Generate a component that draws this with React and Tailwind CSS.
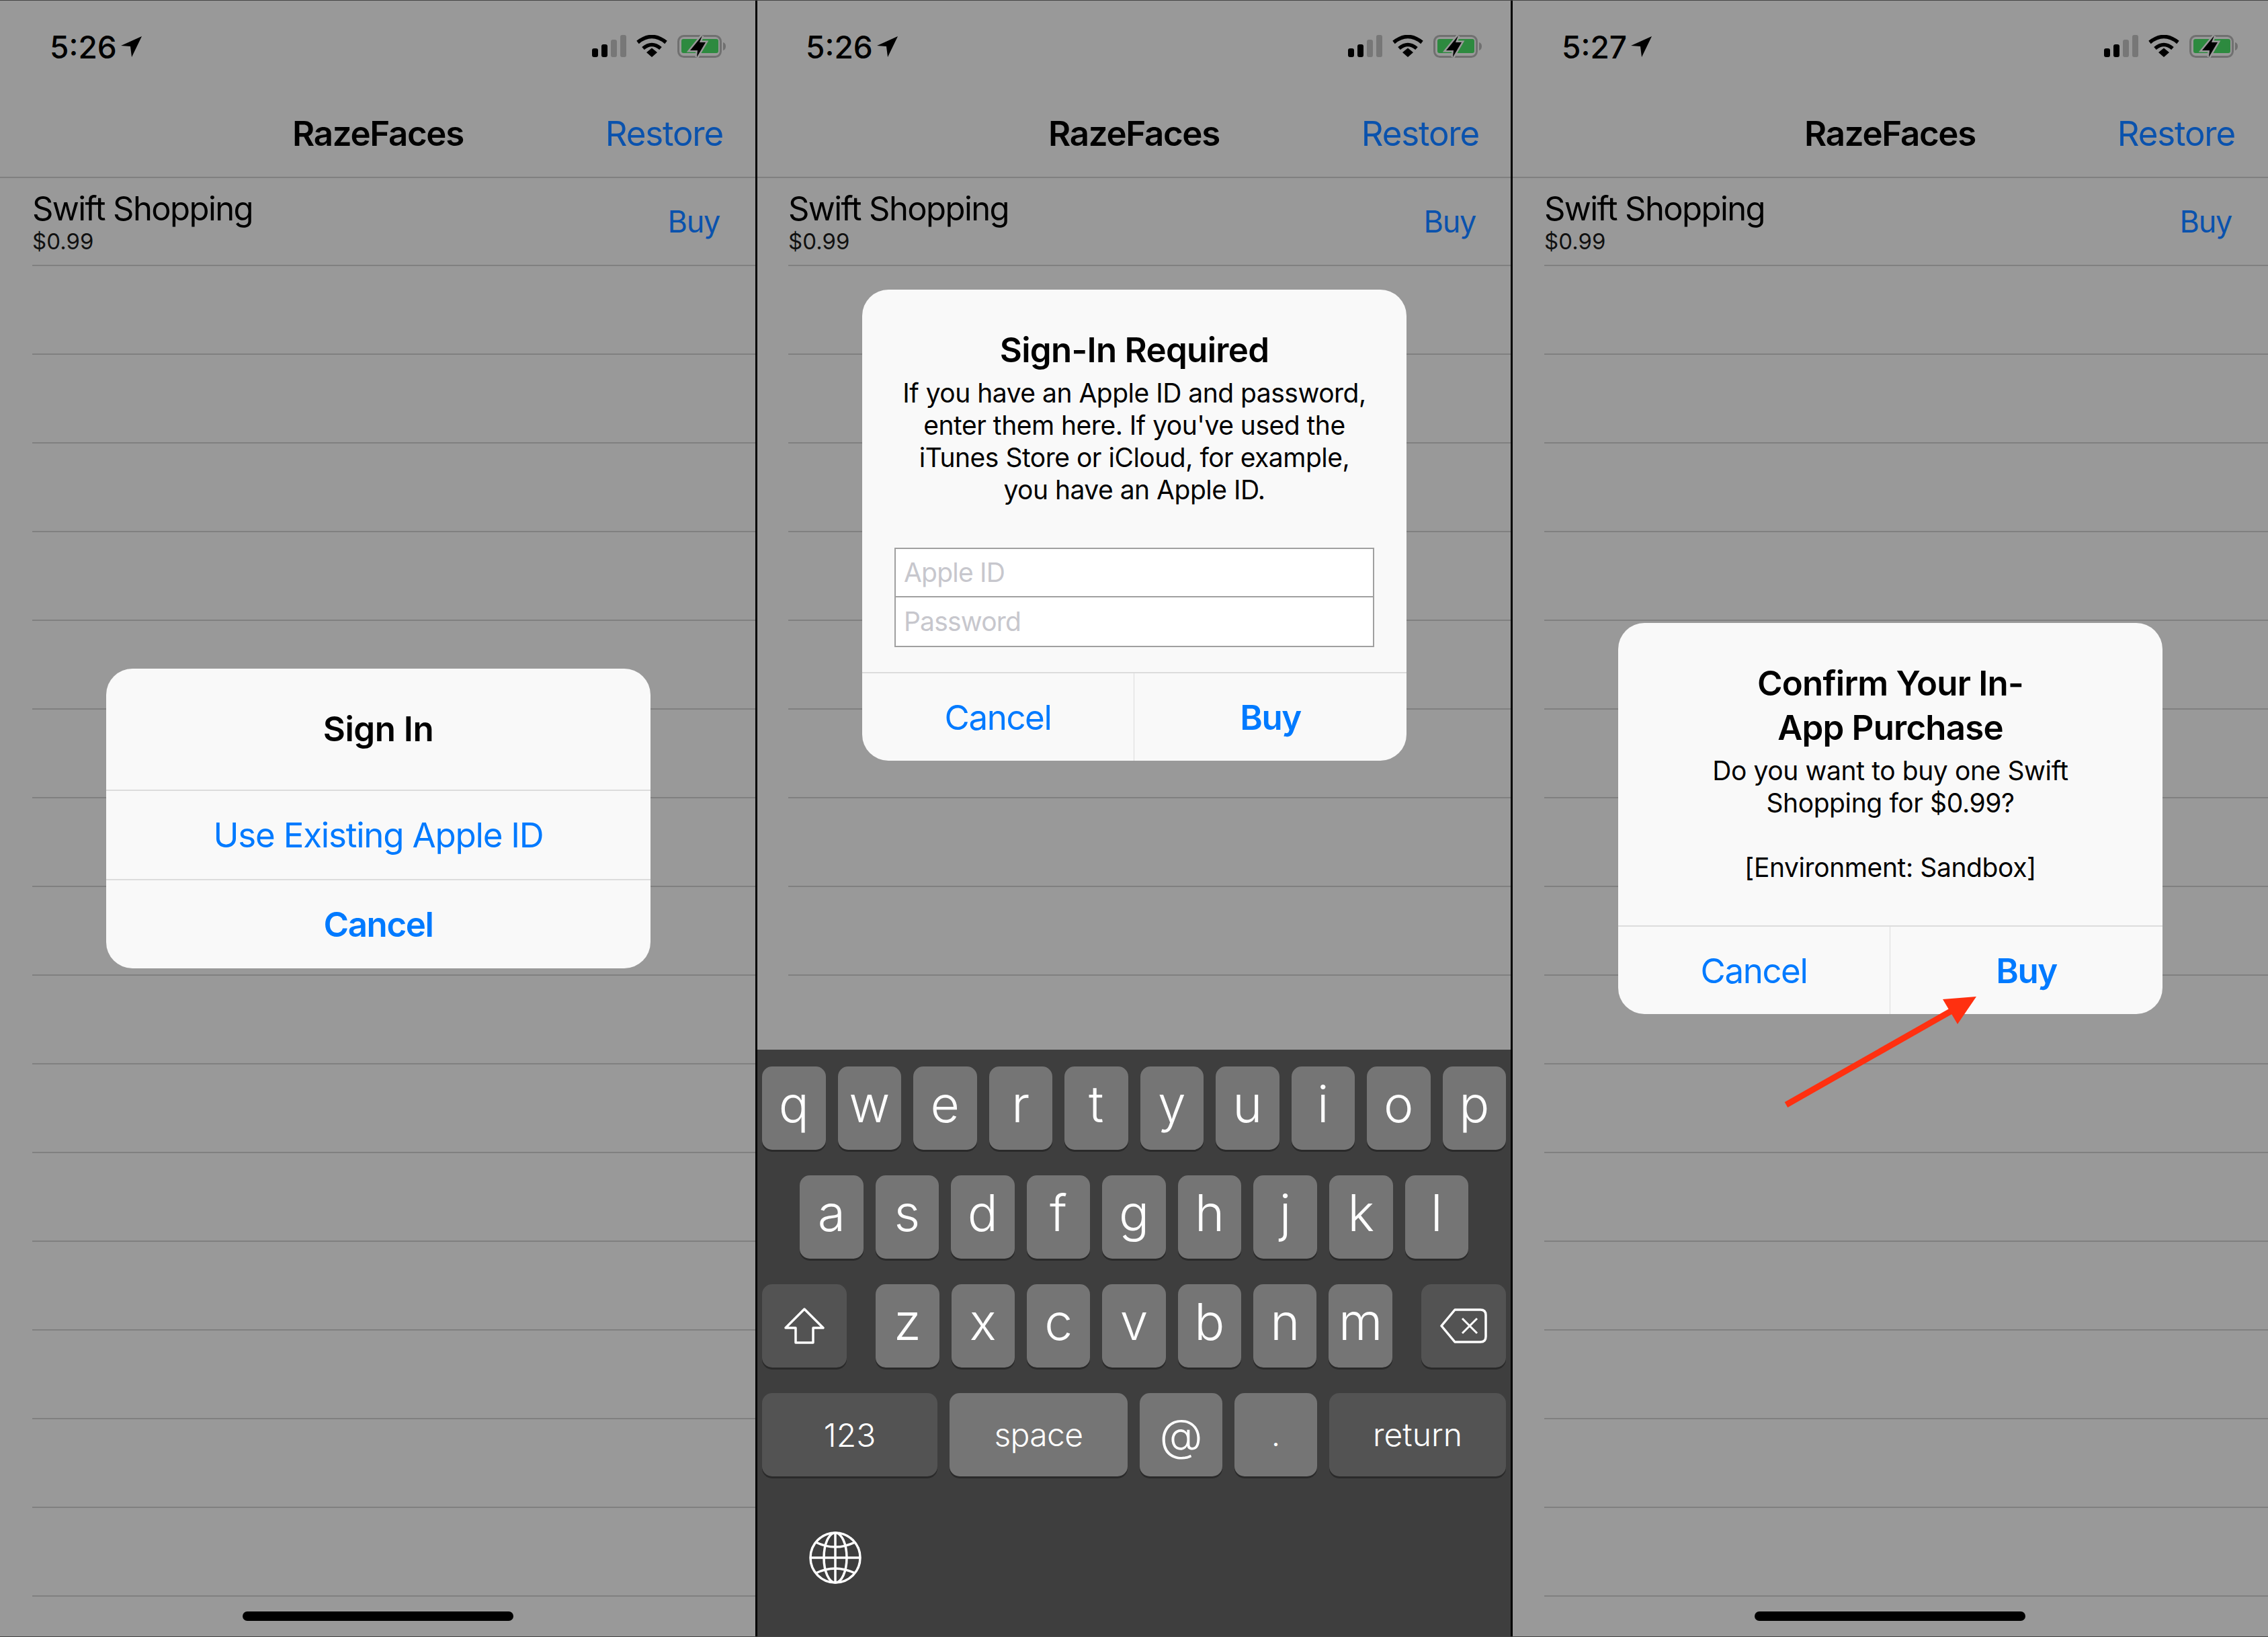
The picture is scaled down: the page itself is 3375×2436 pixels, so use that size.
import React from 'react';

const LocationArrow = () => (
  <svg width="32" height="32" viewBox="0 0 32 32" className="ml-[6px] mt-[2px]">
    <path d="M31 0 L0 14 L14 15 L16 31 Z" fill="#000" />
  </svg>
);

const SignalBars = () => (
  <svg width="52" height="33" viewBox="0 0 52 33">
    <rect x="0" y="20" width="9" height="13" rx="3" fill="#000" />
    <rect x="14" y="14" width="9" height="19" rx="3" fill="#000" />
    <rect x="28" y="7" width="9" height="26" rx="3" fill="#777" />
    <rect x="42" y="0" width="9" height="33" rx="3" fill="#777" />
  </svg>
);

const Wifi = () => (
  <svg width="46" height="33" viewBox="0 0 46 33" fill="none" stroke="#000" strokeWidth="5.5">
    <path d="M2 11 Q23 -6 44 11" />
    <path d="M10 20 Q23 9 36 20" />
    <path d="M15 26 L23 19.5 L31 26 L23 33 Z" fill="#000" stroke="none" />
  </svg>
);

const Battery = () => (
  <svg width="74" height="34" viewBox="0 0 74 34">
    <rect x="2.5" y="1.5" width="63" height="31" rx="8" fill="none" stroke="#707070" strokeWidth="3" />
    <rect x="7" y="6" width="55" height="21" rx="3" fill="#2d8a3f" />
    <path d="M69 11 Q73 12 73 17 Q73 22 69 23 Z" fill="#707070" />
    <path d="M38 1 L20 23 L31 23 L30 33 L43 11 L34 11 Z" fill="#000" stroke="#999" strokeWidth="5" paintOrder="stroke" />
  </svg>
);

const StatusBar = ({ time }) => (
  <div className="h-[132px] flex items-start justify-between pl-[74px] pr-[44px] pt-[52px]">
    <div className="flex items-start">
      <span className="text-[46px] leading-[36px] font-medium text-black">{time}</span>
      <LocationArrow />
    </div>
    <div className="flex items-start gap-[14px]">
      <SignalBars />
      <Wifi />
      <Battery />
    </div>
  </div>
);

const ListRow = ({ first }) => (
  <div className={`ml-[48px] border-b-2 border-[#808080] ${first ? 'h-[131px]' : 'h-[132px]'}`}>
    {first && (
      <div className="h-full flex items-center justify-between pr-[54px]">
        <div>
          <div className="text-[49px] leading-[58px] tracking-[-1.6px] text-black">Swift Shopping</div>
          <div className="text-[33px] leading-[36px] mt-[1px] text-[#111]">$0.99</div>
        </div>
        <span className="text-[45px] text-[#0a52ad] mt-[1px] tracking-[-1.3px]">Buy</span>
      </div>
    )}
  </div>
);

const Screen = ({ time }) => (
  <div className="h-full bg-[#999999]">
    <StatusBar time={time} />
    <div className="h-[133px] pt-[3px] relative flex items-center justify-center border-b-2 border-[#808080]">
      <span className="text-[51px] font-semibold tracking-[-1.3px] text-black">RazeFaces</span>
      <span className="absolute right-[49px] text-[51px] text-[#0a52ad] tracking-[-1.2px]">Restore</span>
    </div>
    {Array.from({ length: 17 }).map((_, i) => (
      <ListRow key={i} first={i === 0} />
    ))}
  </div>
);

const HomeIndicator = () => (
  <div className="absolute bottom-[24px] left-[361px] w-[403px] h-[14px] rounded-full bg-black" />
);

const Alert = ({ className, children }) => (
  <div className={`absolute left-[158px] w-[810px] rounded-[39px] bg-[#f9f9f9] overflow-hidden text-center text-black ${className}`}>
    {children}
  </div>
);

const AlertButtons = () => (
  <div className="h-[132px] flex border-t-2 border-[#dcdcdc] text-[51px] text-[#007aff] tracking-[-1.4px]">
    <div className="w-[405px] pt-[2px] flex items-center justify-center border-r border-[#dcdcdc]">Cancel</div>
    <div className="flex-1 pt-[2px] flex items-center justify-center font-semibold">Buy</div>
  </div>
);

const Key = ({ w, dark, size = 'text-[75px]', children }) => (
  <div
    className={`${w} ${dark ? 'bg-[#535353]' : 'bg-[#757575]'} h-[124px] rounded-[15px] shadow-[0_3px_0_#2a2a2a] flex items-center justify-center font-light text-white ${size}`}
  >
    {children}
  </div>
);

const LetterRow = ({ letters, className }) => (
  <div className={`flex gap-[18px] ${className}`}>
    {letters.split('').map((l) => (
      <Key key={l} w="flex-1">
        <span className="-mt-[12px]">{l}</span>
      </Key>
    ))}
  </div>
);

const Keyboard = () => (
  <div className="absolute left-0 right-0 bottom-0 h-[874px] bg-[#3e3e3e] pt-[25px]">
    <div className="flex flex-col gap-[38px]">
      <LetterRow letters="qwertyuiop" className="px-[9px]" />
      <LetterRow letters="asdfghjkl" className="px-[65px]" />
      <div className="flex justify-between px-[9px]">
        <Key w="w-[126px]" dark>
          <svg width="60" height="54" viewBox="0 0 60 54" fill="none" stroke="#fff" strokeWidth="3.5" strokeLinejoin="round">
            <path d="M30 2 L58 30 L43 30 L43 52 L17 52 L17 30 L2 30 Z" />
          </svg>
        </Key>
        <div className="flex gap-[18px]">
          {'zxcvbnm'.split('').map((l) => (
            <Key key={l} w="w-[94.4px]">
              <span className="-mt-[12px]">{l}</span>
            </Key>
          ))}
        </div>
        <Key w="w-[126px]" dark>
          <svg width="70" height="52" viewBox="0 0 70 52" fill="none" stroke="#fff" strokeWidth="3.5" strokeLinejoin="round">
            <path d="M22 2 L60 2 Q68 2 68 10 L68 42 Q68 50 60 50 L22 50 L2 26 Z" />
            <path d="M33 15 L55 37 M55 15 L33 37" strokeWidth="3" />
          </svg>
        </Key>
      </div>
      <div className="flex gap-[18px] px-[9px]">
        <Key w="w-[261px]" dark size="text-[48px] pt-[2px]">123</Key>
        <Key w="w-[265px]" size="text-[48px] tracking-[-0.6px]">space</Key>
        <Key w="w-[123px]" size="text-[66px]">@</Key>
        <Key w="w-[123px]" size="text-[48px]">.</Key>
        <Key w="flex-1" dark size="text-[48px]">return</Key>
      </div>
    </div>
    <svg className="ml-[78px] mt-[81px]" width="80" height="80" viewBox="0 0 80 80" fill="none" stroke="#fff" strokeWidth="3.5">
      <circle cx="40" cy="40" r="37" />
      <ellipse cx="40" cy="40" rx="17" ry="37" />
      <path d="M40 3 V77 M3 40 H77" />
      <path d="M11 17 Q40 31 69 17 M11 63 Q40 49 69 63" />
    </svg>
  </div>
);

export default function App() {
  return (
    <div className="relative w-[3375px] h-[2436px] flex overflow-hidden font-[Inter,sans-serif]">
      {/* sign in */}
      <div className="relative w-[1125px] h-full overflow-hidden">
        <Screen time="5:26" />
        <Alert className="top-[995px]">
          <div className="h-[180px] flex items-center justify-center text-[51px] font-semibold tracking-[-0.5px]">Sign In</div>
          <div className="h-[133px] pt-[2px] flex items-center justify-center border-t-2 border-[#dcdcdc] text-[51px] text-[#007aff] tracking-[-1.2px]">
            Use Existing Apple ID
          </div>
          <div className="h-[133px] pt-[2px] flex items-center justify-center border-t-2 border-[#dcdcdc] text-[51px] font-semibold text-[#007aff] tracking-[-1.4px]">
            Cancel
          </div>
        </Alert>
        <HomeIndicator />
      </div>

      {/* sign in required + keyboard */}
      <div className="relative w-[1125px] h-full overflow-hidden">
        <Screen time="5:26" />
        <Alert className="top-[431px]">
          <div className="pt-[60px] text-[51px] leading-[60px] font-semibold tracking-[-0.7px]">Sign-In Required</div>
          <div className="mt-[10px] text-[39px] leading-[48px] tracking-[-0.5px]">
            <div>If you have an Apple ID and password,</div>
            <div>enter them here. If you've used the</div>
            <div>iTunes Store or iCloud, for example,</div>
            <div>you have an Apple ID.</div>
          </div>
          <div className="mx-[48px] mt-[62px] border-2 border-[#a0a0a0] bg-white text-left text-[39px] text-[#c7c7cd] tracking-[-0.8px]">
            <div className="h-[72px] flex items-center px-[12px] border-b-2 border-[#a0a0a0]">Apple ID</div>
            <div className="h-[72px] flex items-center px-[12px]">Password</div>
          </div>
          <div className="mt-[37px]">
            <AlertButtons />
          </div>
        </Alert>
        <Keyboard />
      </div>

      {/* confirm purchase */}
      <div className="relative w-[1125px] h-full overflow-hidden">
        <Screen time="5:27" />
        <Alert className="top-[927px]">
          <div className="pt-[57px] text-[51px] leading-[66px] font-semibold tracking-[-0.8px]">
            <div>Confirm Your In-</div>
            <div>App Purchase</div>
          </div>
          <div className="mt-[7px] text-[39px] leading-[48px] tracking-[-0.4px]">
            <div>Do you want to buy one Swift</div>
            <div>Shopping for $0.99?</div>
            <div className="h-[48px]" />
            <div>[Environment: Sandbox]</div>
          </div>
          <div className="mt-[62px]">
            <AlertButtons />
          </div>
        </Alert>
        <svg className="absolute left-[400px] top-[1475px]" width="300" height="180" viewBox="0 0 300 180" fill="none">
          <path d="M8 169 L265 23" stroke="#ff3010" strokeWidth="9" />
          <path d="M291 8 L241 12 L263 49 Z" fill="#ff3010" />
        </svg>
        <HomeIndicator />
      </div>

      {/* frame lines between the shots */}
      <div className="absolute inset-y-0 left-[1124px] w-[3px] bg-black" />
      <div className="absolute inset-y-0 left-[2248px] w-[3px] bg-black" />
      <div className="absolute inset-x-0 top-0 h-[1px] bg-[#444]" />
      <div className="absolute inset-x-0 bottom-0 h-[1px] bg-[#444]" />
    </div>
  );
}
